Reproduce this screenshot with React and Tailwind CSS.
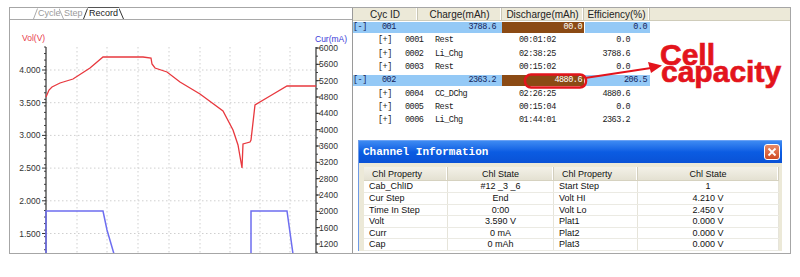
import React from "react";

// chart scale helpers, page coordinates
const volY = (v) => 70 + (4 - v) * 65.4;
const curY = (c) => 48 + (6000 - c) * 0.04083;

const volTicks = [4, 3.5, 3, 2.5, 2, 1.5];
const curTicks = [6000, 5600, 5200, 4800, 4400, 4000, 3600, 3200, 2800, 2400, 2000, 1600, 1200];
const gridX = [77, 107, 138, 169, 200, 230, 260, 290];

const redLine =
  "46,97 49,90 52,87 60,83 73,79 90,68 103,57 143,57 151,58 152,64 155,68 167,72 180,82 200,94 223,111 233,130 238,145 242,168 243,144 250,142 251,140 255,105 270,96 287,86 316,86";
const blueLine1 = "46,254 46,211 103,211 107,230 114,254";
const blueLine2 = "251,254 251,211 287,211 293,254";

const cycRows = [
  { type: "cyc", id: "001", charge: "3788.6", dis: "00.0", eff: "0.0" },
  { type: "step", id: "0001", name: "Rest", time: "00:01:02", eff: "0.0" },
  { type: "step", id: "0002", name: "Li_Chg", time: "02:38:25", eff: "3788.6" },
  { type: "step", id: "0003", name: "Rest", time: "00:15:02", eff: "0.0" },
  { type: "cyc", id: "002", charge: "2363.2", dis: "4880.6", eff: "206.5" },
  { type: "step", id: "0004", name: "CC_DChg", time: "02:26:25", eff: "4880.6" },
  { type: "step", id: "0005", name: "Rest", time: "00:15:04", eff: "0.0" },
  { type: "step", id: "0006", name: "Li_Chg", time: "01:44:01", eff: "2363.2" },
];

const chlRows = [
  ["Cab_ChlID", "#12 _3 _6", "Start Step", "1"],
  ["Cur Step", "End", "Volt HI", "4.210 V"],
  ["Time In Step", "0:00", "Volt Lo", "2.450 V"],
  ["Volt", "3.590 V", "Plat1", "0.000 V"],
  ["Curr", "0 mA", "Plat2", "0.000 V"],
  ["Cap", "0 mAh", "Plat3", "0.000 V"],
];

function Slant({ back, dark }) {
  return (
    <svg width="5" height="11" className="shrink-0">
      <line
        x1={back ? 0 : 0.5}
        y1={back ? 0.5 : 11}
        x2={back ? 4.5 : 4.5}
        y2={back ? 11 : 0.5}
        stroke={dark ? "#333" : "#aaa"}
        strokeWidth="1"
      />
    </svg>
  );
}

function Tabs() {
  return (
    <div className="h-[12px] border-b border-[#a9a9a9] flex items-end pl-[23px] text-[9px] leading-[11px]">
      <Slant />
      <span className="w-[21px] text-[#9a9a9a]">Cycle</span>
      <Slant back />
      <span className="w-[19px] text-[#9a9a9a]">Step</span>
      <Slant dark />
      <span className="w-[31px] text-[#1a1a1a] border-t border-[#555] bg-white pl-[1px]">Record</span>
      <Slant back dark />
    </div>
  );
}

function Chart() {
  return (
    <svg width="342" height="233" viewBox="10 20 342 233" className="block">
      {gridX.map((x) => (
        <line key={x} x1={x} y1="47" x2={x} y2="253" stroke="#cfcfcf" strokeDasharray="1.5 2.5" />
      ))}
      {volTicks.map((v) => (
        <line key={v} x1="46" y1={volY(v)} x2="316" y2={volY(v)} stroke="#cfcfcf" strokeDasharray="1.5 2.5" />
      ))}
      {Array.from({ length: 32 }, (_, i) => 47 + i * 6.54).map((y) => (
        <line key={"l" + y} x1="44" y1={y} x2="46" y2={y} stroke="#444" />
      ))}
      {Array.from({ length: 26 }, (_, i) => 48 + i * 8.17).map((y) => (
        <line key={"r" + y} x1="316" y1={y} x2="318" y2={y} stroke="#444" />
      ))}
      {volTicks.map((v) => (
        <line key={"lm" + v} x1="42" y1={volY(v)} x2="46" y2={volY(v)} stroke="#333" />
      ))}
      {curTicks.map((c) => (
        <line key={"rm" + c} x1="316" y1={curY(c)} x2="320" y2={curY(c)} stroke="#333" />
      ))}
      <line x1="46" y1="47" x2="46" y2="253" stroke="#333" strokeWidth="1.2" />
      <line x1="316" y1="47" x2="316" y2="253" stroke="#333" strokeWidth="1.2" />
      <polyline points={redLine} fill="none" stroke="#e8383e" strokeWidth="1.3" />
      <polyline points={blueLine1} fill="none" stroke="#6e6ef0" strokeWidth="1.5" />
      <polyline points={blueLine2} fill="none" stroke="#6e6ef0" strokeWidth="1.5" />
      <g fontFamily="Liberation Sans, Arial, sans-serif" fontSize="8.5" fill="#333">
        {volTicks.map((v) => (
          <text key={v} x="40.5" y={volY(v) + 3} textAnchor="end">{v.toFixed(3)}</text>
        ))}
        {curTicks.map((c) => (
          <text key={c} x="319" y={curY(c) + 3}>{c}</text>
        ))}
        <text x="22" y="41" fill="#e8384a">Vol(V)</text>
        <text x="315" y="42" fill="#3a3ad8">Cur(mA)</text>
      </g>
    </svg>
  );
}

function HeadCell({ w, children }) {
  return (
    <div className={`${w} h-full flex items-center justify-center border-r border-[#c9c6b4] shadow-[inset_-1px_0_0_#fff] whitespace-nowrap overflow-hidden`}>
      {children}
    </div>
  );
}

function CycRow({ row }) {
  if (row.type === "cyc") {
    return (
      <div className="h-[13.3px] flex items-center">
        <div className="w-[149px] h-[11px] bg-[#94c9f6] flex items-center text-[#14245a]">
          <span className="w-[29px]">[-]</span>
          <span className="flex-1">{row.id}</span>
          <span className="pr-[6px]">{row.charge}</span>
        </div>
        <div className="w-[82px] h-[11px] bg-[#8b4a14] text-white text-right pr-[2px] leading-[11px]">{row.dis}</div>
        <div className="w-[65px] h-[11px] ml-[1px] bg-[#94c9f6] text-[#14245a] text-right pr-[3px] leading-[11px]">{row.eff}</div>
      </div>
    );
  }
  return (
    <div className="h-[13.3px] flex items-center pl-[25px] text-[#1a1a1a]">
      <span className="w-[27px]">[+]</span>
      <span className="w-[30px]">{row.id}</span>
      <span className="w-[84px]">{row.name}</span>
      <span className="w-[50px]">{row.time}</span>
      <span className="w-[61px] text-right">{row.eff}</span>
    </div>
  );
}

function ChannelInfo() {
  const cols = ["w-[84px] pl-[5px]", "w-[106px] text-center", "w-[84px] pl-[5px]", "w-[141px] text-center"];
  return (
    <div className="ml-[5px] mt-[13px] w-[424px] bg-[#ece9d8] border-l border-[#6f9be6]">
      <div className="h-[23px] flex items-center justify-between pl-[4px] pr-[2px] bg-gradient-to-b from-[#3d8af2] via-[#0b5ce2] to-[#0a52d6] border-t border-[#6aa2f5]">
        <span className="font-['Liberation_Mono',monospace] font-bold text-[11px] text-white">Channel Information</span>
        <div className="w-[16px] h-[16px] rounded-[3px] border border-white bg-gradient-to-b from-[#e88a66] to-[#cf4a22] flex items-center justify-center">
          <svg width="10" height="10" viewBox="0 0 10 10">
            <path d="M1.5 1.5 L8.5 8.5 M8.5 1.5 L1.5 8.5" stroke="#fff" strokeWidth="1.8" />
          </svg>
        </div>
      </div>
      <div className="pl-[5px] pt-[4px] text-[9px] text-[#111]">
        <div className="w-[415px] h-[14px] flex items-center bg-gradient-to-b from-[#f3f1e8] to-[#e4e1d2] border-b border-[#d6d2c0]">
          {["Chl Property", "Chl State", "Chl Property", "Chl State"].map((t, i) => (
            <div key={i} className={`${cols[i]} ${i === 0 || i === 2 ? "pl-[8px]" : ""} h-full leading-[14px] border-r border-[#d3cfbe] shadow-[inset_-1px_0_0_#fff]`}>
              {t}
            </div>
          ))}
        </div>
        {chlRows.map((r, i) => (
          <div key={i} className="w-[415px] h-[11.6px] flex bg-white border-b border-[#ebeae3]">
            {r.map((c, j) => (
              <div key={j} className={`${cols[j]} leading-[11px] border-r border-[#e6e4da]`}>{c}</div>
            ))}
          </div>
        ))}
      </div>
    </div>
  );
}

export default function App() {
  return (
    <div className="relative w-[800px] h-[277px] bg-white overflow-hidden font-['Liberation_Sans',Arial,sans-serif]">
      <div className="pt-[7px] pl-[9px]">
        <div className="flex w-[782px] h-[247px] border border-[#a6a6a6] bg-white">
          <div className="w-[343px] h-full border-r border-[#9a9a9a]">
            <Tabs />
            <Chart />
          </div>
          <div className="w-[437px] h-full overflow-hidden">
            <div className="h-[13px] flex bg-[#ece9d8] border-b border-[#cfccba] text-[10px] text-[#222]">
              <HeadCell w="w-[65px]">Cyc ID</HeadCell>
              <HeadCell w="w-[84px]">Charge(mAh)</HeadCell>
              <HeadCell w="w-[82px]">Discharge(mAh)</HeadCell>
              <HeadCell w="w-[66px]">Efficiency(%)</HeadCell>
              <div className="flex-1" />
            </div>
            <div className="font-['Liberation_Mono',monospace] text-[8.5px] tracking-[-0.5px] leading-[11px]">
              {cycRows.map((row) => (
                <CycRow key={row.id} row={row} />
              ))}
            </div>
            <ChannelInfo />
          </div>
        </div>
      </div>

      {/* annotation over the list */}
      <svg width="180" height="40" viewBox="500 55 180 40" className="absolute left-[500px] top-[55px] pointer-events-none">
        <rect x="525" y="74.5" width="61" height="13" rx="6" fill="none" stroke="#e3141c" strokeWidth="2.5" />
        <line x1="585" y1="78" x2="651" y2="68" stroke="#e3141c" strokeWidth="2" />
        <path d="M662 65.5 L648 62 L651 73 Z" fill="#e3141c" />
      </svg>
      <div className="absolute left-[660px] top-[46px] text-[30px] leading-[17px] font-bold text-[#e3141c] [-webkit-text-stroke:0.7px_#e3141c]">
        <div>Cell</div>
        <div className="pl-[1px]">capacity</div>
      </div>
    </div>
  );
}
